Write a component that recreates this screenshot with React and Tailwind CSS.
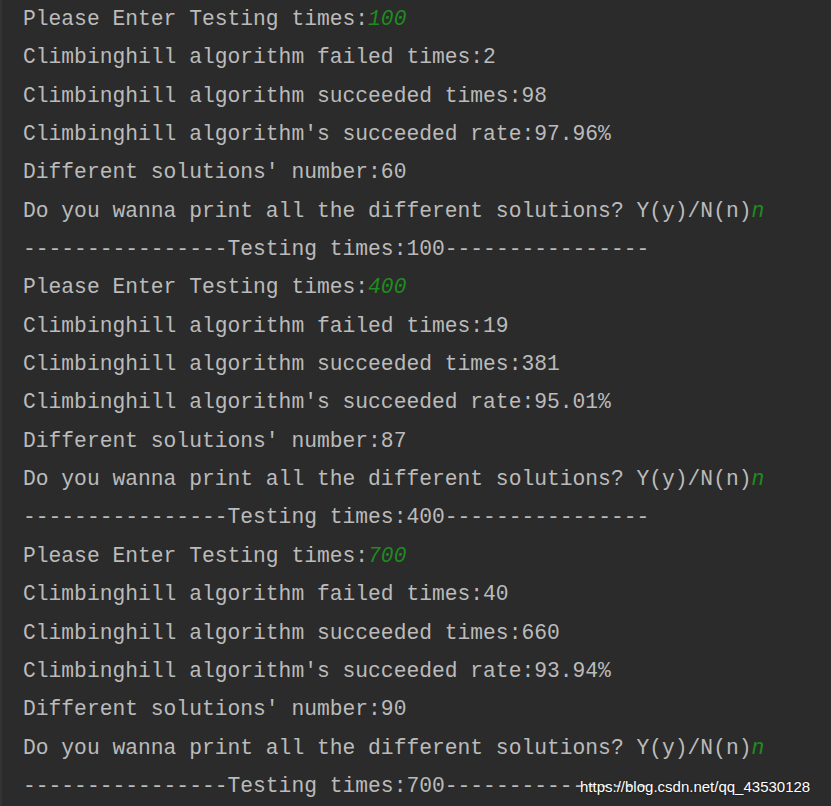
import React from "react";

const runs = [
  { input: "100", failed: 2, ok: 98, rate: "97.96%", diff: 60 },
  { input: "400", failed: 19, ok: 381, rate: "95.01%", diff: 87 },
  { input: "700", failed: 40, ok: 660, rate: "93.94%", diff: 90 },
];

const Input = ({ children }) => (
  <span className="italic text-[#1f8c1f]">{children}</span>
);

const App = () => {
  const dashes = "----------------";
  return (
    <div className="relative w-[831px] h-[806px] overflow-hidden bg-[#2b2b2b] border-l-2 border-[#313335]">
      <div
        className="pl-[21px] pt-0 text-[#bbbbbb] text-[21.3px] leading-[38.35px] whitespace-pre"
        style={{ fontFamily: '"Liberation Mono", "DejaVu Sans Mono", monospace' }}
      >
        {runs.map((r) => (
          <React.Fragment key={r.input}>
            <div>
              Please Enter Testing times:<Input>{r.input}</Input>
            </div>
            <div>Climbinghill algorithm failed times:{r.failed}</div>
            <div>Climbinghill algorithm succeeded times:{r.ok}</div>
            <div>Climbinghill algorithm's succeeded rate:{r.rate}</div>
            <div>Different solutions' number:{r.diff}</div>
            <div>
              Do you wanna print all the different solutions? Y(y)/N(n)
              <Input>n</Input>
            </div>
            <div>
              {dashes}Testing times:{r.input}
              {dashes}
            </div>
          </React.Fragment>
        ))}
      </div>
      <div
        className="absolute left-[578px] top-[777px] text-[15px] leading-[20px] text-white [text-shadow:0_0_2px_rgba(0,0,0,0.6)]"
        style={{ fontFamily: '"Liberation Sans", Arial, sans-serif' }}
      >
        https://blog.csdn.net/qq_43530128
      </div>
    </div>
  );
};

export default App;
